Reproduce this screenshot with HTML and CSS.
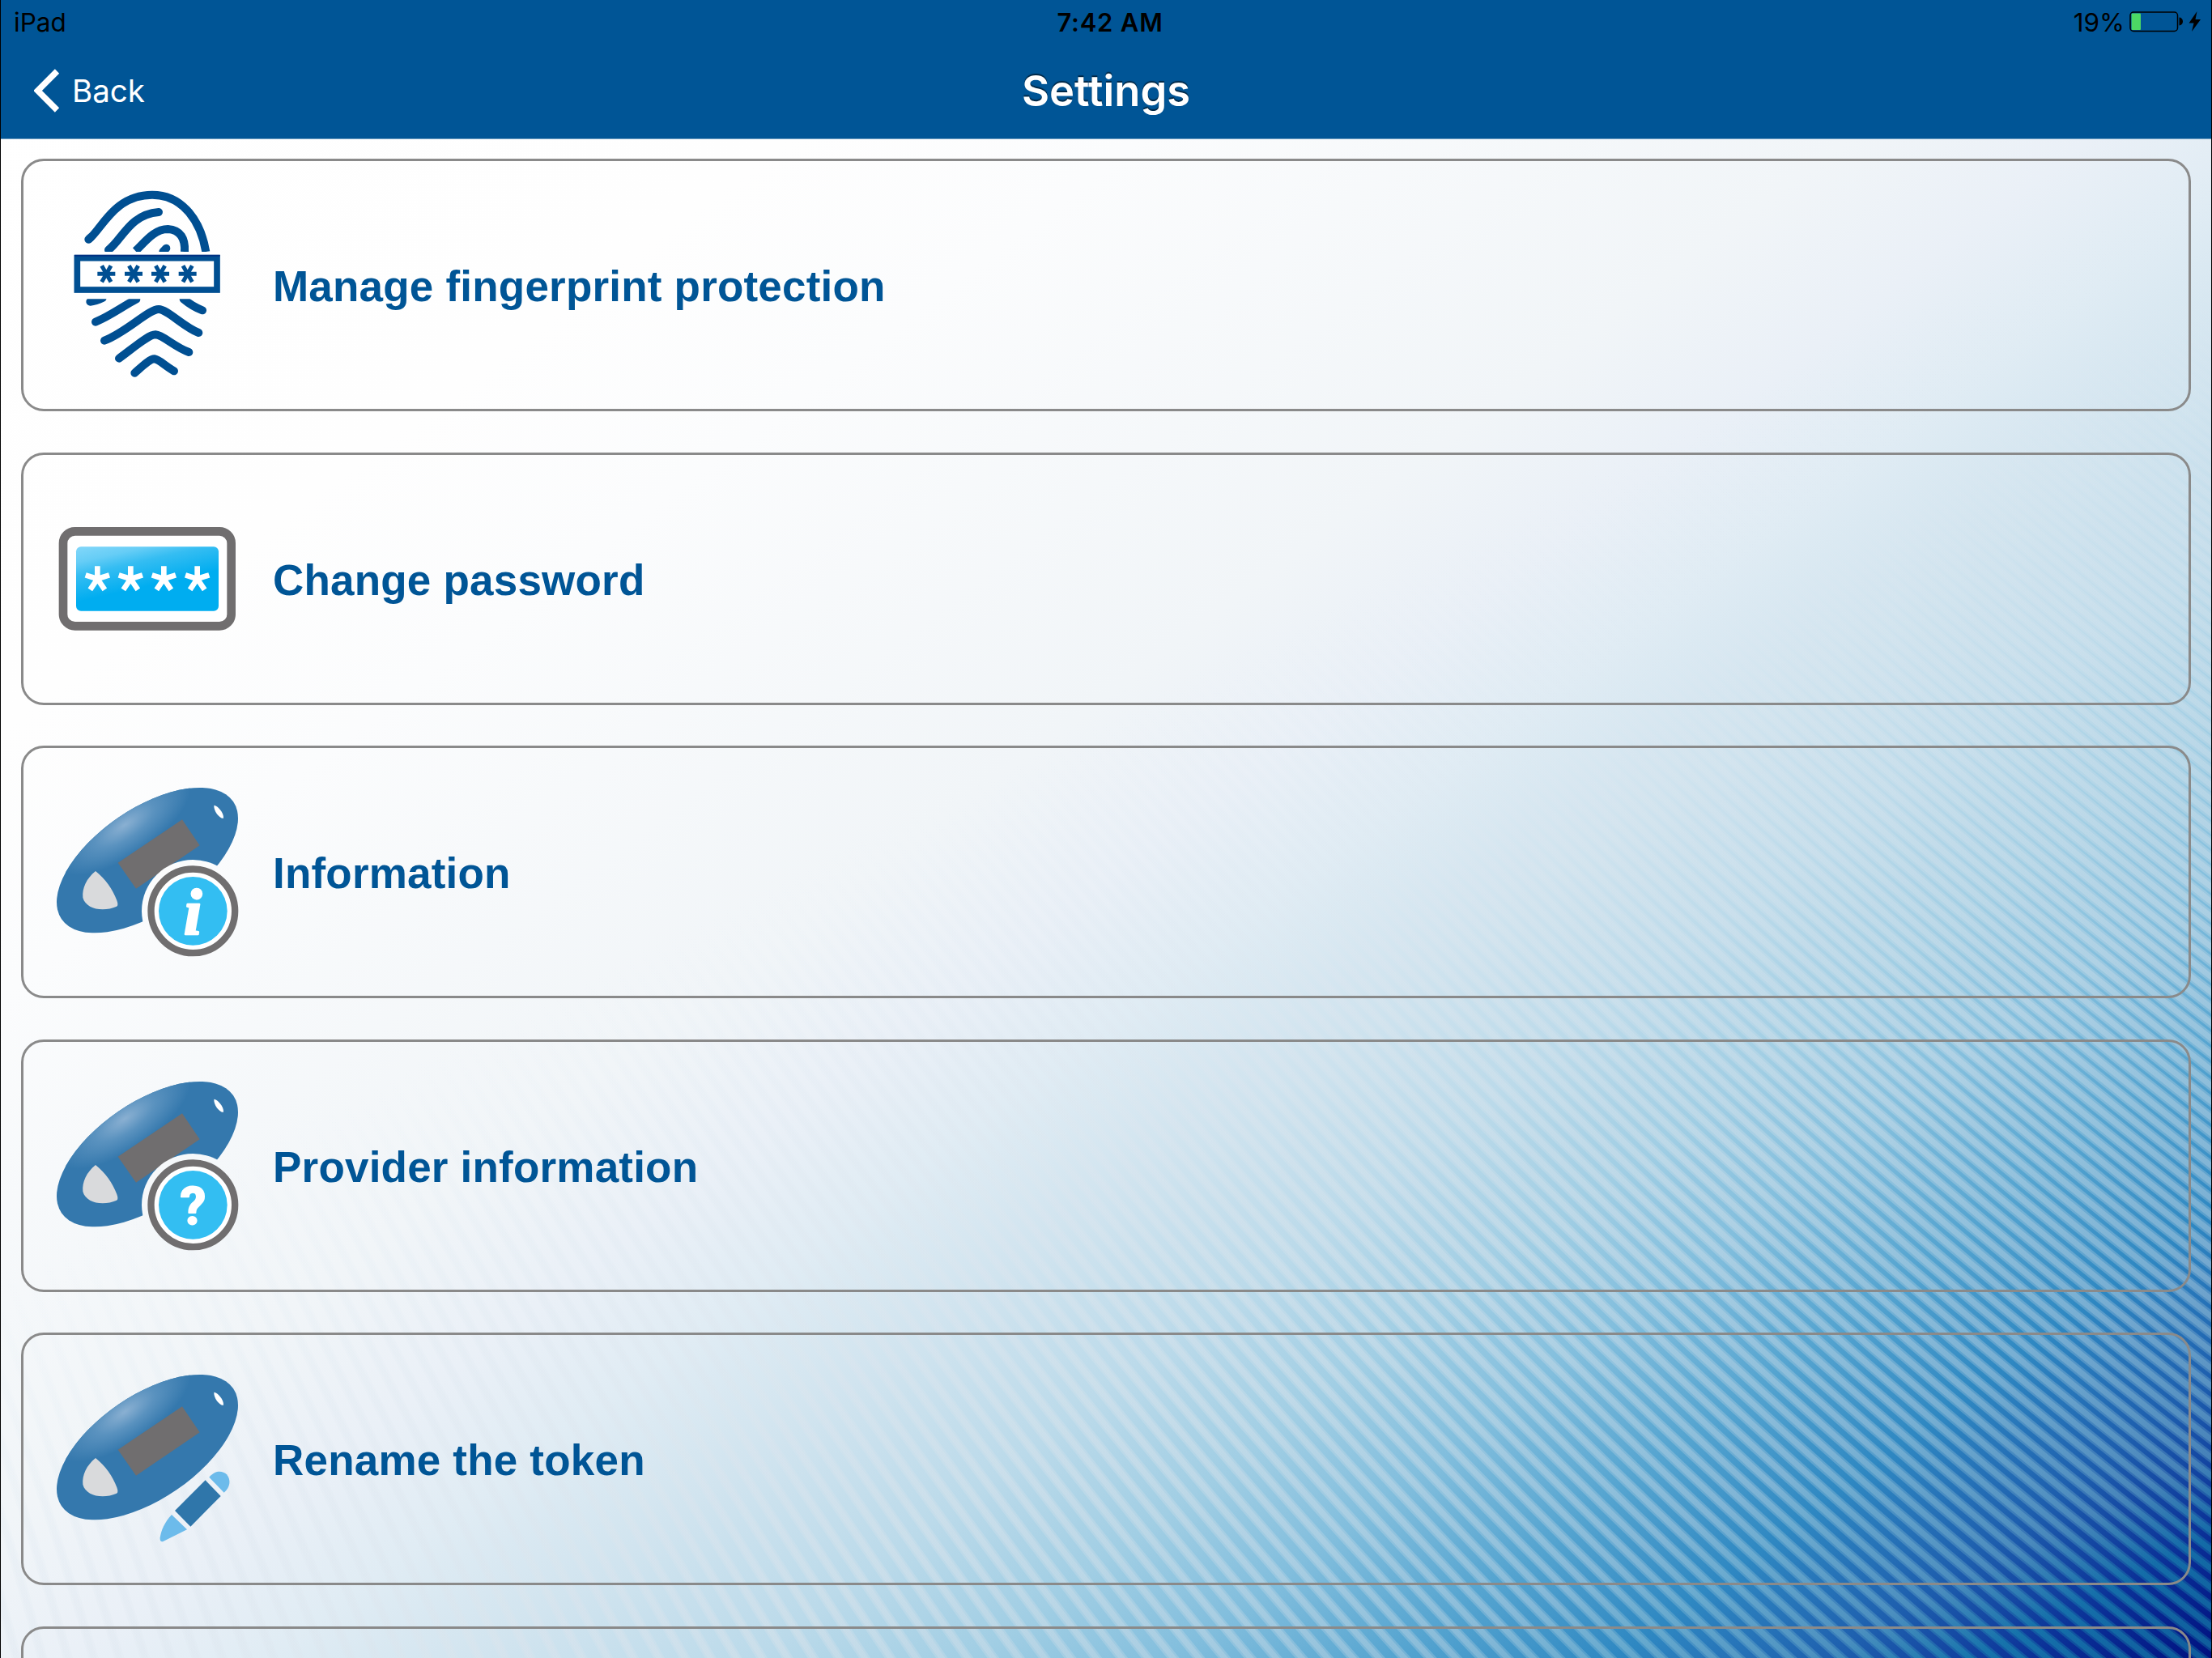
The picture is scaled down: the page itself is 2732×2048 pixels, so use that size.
FILE: index.html
```html
<!DOCTYPE html>
<html lang="en">
<head>
  <meta charset="UTF-8" />
  <meta name="viewport" content="width=device-width, initial-scale=1.0" />
  <title>Settings</title>
  <link rel="stylesheet" href="styles.css">
</head>
<body>
  <svg class="defs" width="0" height="0">
    <defs>
      <radialGradient id="shine">
        <stop offset="0" stop-color="#8ab0d2" />
        <stop offset="0.45" stop-color="#5a92bf" />
        <stop offset="1" stop-color="#3478ad" />
      </radialGradient>
      <clipPath id="tokenShape">
        <ellipse cx="396" cy="337" rx="385.5" ry="191.4" transform="rotate(-34.4 396 337)" />
      </clipPath>
      <mask id="badgeCut" maskUnits="userSpaceOnUse" x="0" y="0" width="800" height="750">
        <rect width="800" height="750" fill="#fff" />
        <circle cx="565" cy="525" r="190" fill="#000" />
      </mask>
      <g id="token">
        <g clip-path="url(#tokenShape)">
          <rect width="800" height="700" fill="#3478ad" />
          <ellipse cx="312" cy="206" rx="285" ry="112" fill="url(#shine)" transform="rotate(-34.4 312 206)" />
        </g>
        <path d="M287 346 L525 186 L590 282 L354 442 Z" fill="#706e6f" />
        <path d="M204 377 C170 405 154 440 157 475 C168 518 232 530 282 508 Q290 505 283 486 C268 445 240 405 204 377 Z" fill="#d9dadc" />
        <path d="M643 133 C655 133 680 160 678 181 C665 184 641 155 643 133 Z" fill="#fff" />
      </g>
      <g id="badge">
        <circle cx="565" cy="525" r="155.500" fill="#fff" stroke="#706e6f" stroke-width="25" />
        <circle cx="565" cy="525" r="127" fill="#33bef2" />
      </g>
      <g id="star6" stroke="#004f92" stroke-width="15" stroke-linecap="butt">
        <path d="M-33 0 H33 M-17 -30 L17 30 M17 -30 L-17 30" />
      </g>
      <path id="star5" d="M0 0 V-47 M0 0 L-44 -14 M0 0 L44 -14 M0 0 L-27 40 M0 0 L27 40" stroke="#fff" stroke-width="20" />
    </defs>
  </svg>

  <svg class="stripes" viewBox="0 0 2732 2048">
    <defs>
      <linearGradient id="stripeFade" gradientUnits="userSpaceOnUse" x1="300" y1="1420" x2="984" y2="2778">
        <stop offset="0" stop-color="#dde9f2" stop-opacity="0" />
        <stop offset="0.12" stop-color="#dde9f2" stop-opacity="0.09" />
        <stop offset="0.27" stop-color="#dee7ef" stop-opacity="0.2" />
        <stop offset="0.55" stop-color="#dae3eb" stop-opacity="0.3" />
        <stop offset="0.8" stop-color="#c6d8e4" stop-opacity="0.28" />
        <stop offset="0.94" stop-color="#7fc4d2" stop-opacity="0.27" />
        <stop offset="1" stop-color="#1fb0bb" stop-opacity="0.27" />
      </linearGradient>
    </defs>
    <path class="wide" />
    <path class="narrow" />
  </svg>

  <header>
    <div class="status">
      <span class="device">iPad</span>
      <span class="time">7:42 AM</span>
      <span class="power">
        <span class="percent">19%</span>
        <svg width="90" height="28" viewBox="0 0 90 28">
          <rect x="1" y="2" width="58.500" height="23.500" rx="4" fill="none" stroke="#000" stroke-width="1.500" />
          <rect x="2.600" y="3.600" width="11.400" height="20.400" rx="1" fill="#4cd964" />
          <path d="M61.500 8.500 A4.500 5 0 0 1 61.500 18.500 Z" fill="#000" />
          <path d="M83.500 1 L73.500 15.500 H79.500 L77 26 L88 11 H81.500 Z" fill="#000" />
        </svg>
      </span>
    </div>
    <div class="navbar">
      <a class="back" href="#">
        <svg width="33" height="54" viewBox="0 0 33 54"><path d="M28.500 3 L4.500 27 L28.500 51" fill="none" stroke="#fff" stroke-width="7.500" /></svg>
        <span>Back</span>
      </a>
      <h1>Settings</h1>
    </div>
  </header>

  <main class="menu">
    <a class="item" href="#">
      <svg class="icon" viewBox="-93 -33 840 918">
        <g fill="none" stroke="#004f92" stroke-width="30" stroke-linecap="round">
          <path d="M148 257 C195 225 240 92 384 92 C500 92 565 195 583 303" stroke-linecap="butt" />
          <path d="M148 257 L156 250" />
          <path d="M408 156 C300 165 275 255 222 296" />
          <path d="M322 300 C355 270 390 219 442 219 C490 222 507 255 504 303" stroke-linecap="butt" />
          <path d="M436 290 L424 303" />
          <path d="M154 488 C172 486 185 481 200 474" />
          <path d="M174 563 C230 540 275 505 325 479" />
          <path d="M207 632 C290 600 370 516 408 516 C440 516 500 582 556 603" />
          <path d="M261 698 C320 655 370 610 396 610 C425 612 465 655 520 675" />
          <path d="M319 752 C350 725 375 700 392 700 C410 702 430 725 465 745" />
          <path d="M500 478 C520 495 540 508 570 520" />
        </g>
        <path d="M80 303 H640 V478 H80 Z" fill="#fff" />
        <rect x="106" y="326" width="518" height="118" fill="#fff" stroke="#004f92" stroke-width="23" />
        <path d="M96 314 H635 V320 H96 Z" fill="#003083" />
        <use href="#star6" x="214" y="385" />
        <use href="#star6" x="315" y="385" />
        <use href="#star6" x="414" y="385" />
        <use href="#star6" x="515" y="385" />
      </svg>
      <span class="label">Manage fingerprint protection</span>
    </a>
    <a class="item" href="#">
      <svg class="icon" viewBox="-63 -205 840 918">
        <defs>
          <linearGradient id="field" gradientUnits="userSpaceOnUse" x1="270" y1="115" x2="312" y2="300">
            <stop offset="0" stop-color="#7dd5f9" />
            <stop offset="0.25" stop-color="#66cdf6" />
            <stop offset="0.5" stop-color="#35bdf2" />
            <stop offset="1" stop-color="#00adf0" />
          </linearGradient>
        </defs>
        <rect x="84" y="78" width="623" height="351" rx="44" fill="#fff" stroke="#706e6f" stroke-width="32" />
        <rect x="132" y="135" width="528" height="238" rx="18" fill="url(#field)" />
        <use href="#star5" x="211" y="254" />
        <use href="#star5" x="334" y="254" />
        <use href="#star5" x="457" y="254" />
        <use href="#star5" x="581" y="254" />
      </svg>
      <span class="label">Change password</span>
    </a>
    <a class="item" href="#">
      <svg class="icon" viewBox="-63 -79 840 918">
        <g mask="url(#badgeCut)"><use href="#token" /></g>
        <use href="#badge" />
        <text class="mark info" x="564" y="610">i</text>
      </svg>
      <span class="label">Information</span>
    </a>
    <a class="item" href="#">
      <svg class="icon" viewBox="-63 -79 840 918">
        <g mask="url(#badgeCut)"><use href="#token" /></g>
        <use href="#badge" />
        <text class="mark help" x="565" y="596">?</text>
      </svg>
      <span class="label">Provider information</span>
    </a>
    <a class="item" href="#">
      <svg class="icon" viewBox="-63 -79 840 918">
        <use href="#token" />
        <path d="M611 459 L668 518 L556 631 L498 572 Z" fill="#2f76aa" />
        <path d="M625 448 C650 420 675 425 690 438 C706 458 704 485 680 505 Z" fill="#6cbbeb" />
        <path d="M486 587 L543 642 L453 687 Q441 688 443 672 C447 645 460 615 486 587 Z" fill="#6cbbeb" />
      </svg>
      <span class="label">Rename the token</span>
    </a>
    <a class="item" href="#"></a>
  </main>

  <script>
    // fan of slanted background lines, flatter towards the right side
    function stripePath() {
      let d = "";
      for (let k = -60; k < 190; k++) {
        const start = k * 28;
        for (let y = 160; y <= 2060; y += 50) {
          const dy = y - 1700;
          const x = (start + 0.36 * dy - 0.0002 * dy * dy) / (1 - 0.00034 * dy);
          d += (y === 160 ? "M" : "L") + x.toFixed(1) + " " + y;
        }
      }
      return d;
    }

    const lines = stripePath();
    document.querySelectorAll(".stripes path").forEach(path => path.setAttribute("d", lines));
  </script>
</body>
</html>
```

FILE: styles.css
```css
* {
  box-sizing: border-box;
}
html {
  height: 100%;
  overflow: hidden;
  background: #000;
}
body {
  position: relative;
  height: 2048px;
  margin: 0 1px;
  overflow: hidden;
  font-family: Inter, "Liberation Sans", sans-serif;
  background: linear-gradient(to bottom right,
    #ffffff 0%, #fefefe 22%, #fbfcfd 30%, #f1f5f8 46%, #eaf0f7 51.5%,
    #e0ecf4 56%, #d1e4ef 61%, #bbdaea 67%, #a1cee4 72%, #82bedd 76.5%,
    #55a4d0 81.5%, #2f88c2 86.5%, #1e5fae 91.5%, #0b3197 96%, #00107f 100%);
}
.defs {
  position: absolute;
}
.stripes {
  position: absolute;
  top: 0;
  left: 0;
  width: 100%;
  height: 100%;
}
.stripes path {
  fill: none;
  stroke: url(#stripeFade);
}
.stripes .wide {
  stroke-width: 12px;
}
.stripes .narrow {
  stroke-width: 7px;
}
header {
  position: relative;
  height: 172px;
  color: #fff;
  background: #005596;
  border-bottom: 1px solid #6f9dc2;
}
.status {
  display: grid;
  grid-template-columns: 1fr auto 1fr;
  align-items: center;
  height: 54px;
  padding: 0 11px 0 16px;
  font-size: 31.5px;
  color: #000;
}
.time {
  margin-right: -5px;
  font-weight: 600;
  font-size: 31px;
  letter-spacing: 0.8px;
}
.power {
  display: flex;
  justify-content: flex-end;
  align-items: center;
  gap: 6px;
}
.navbar {
  display: grid;
  grid-template-columns: 1fr auto 1fr;
  align-items: center;
  height: 115px;
  padding: 0 41px;
}
.back {
  display: flex;
  align-items: center;
  gap: 14px;
  font-size: 38.5px;
  color: #fff;
  text-decoration: none;
}
h1 {
  margin: 0;
  font-size: 52.5px;
  font-weight: 600;
  text-shadow: 0 -2px 1px rgba(0, 0, 0, 0.55);
}
.menu {
  position: relative;
  display: flex;
  flex-direction: column;
  gap: 50.6px;
  height: 1876px;
  padding: 24px 25px 0;
  overflow: hidden;
}
.item {
  display: flex;
  flex: none;
  align-items: center;
  height: 312px;
  border: 3px solid #8a8a8a;
  border-radius: 28px;
  color: #005596;
  text-decoration: none;
}
.icon {
  width: 280px;
  height: 306px;
}
.label {
  padding: 3px 0 0 28px;
  font-family: "Liberation Sans", Arial, sans-serif;
  font-size: 53px;
  font-weight: bold;
  letter-spacing: 0.2px;
}
.mark {
  fill: #fff;
  stroke: #fff;
  stroke-linejoin: round;
  text-anchor: middle;
  font-weight: bold;
}
.info {
  font-family: "Liberation Serif", serif;
  font-size: 240px;
  font-style: italic;
  stroke-width: 8px;
}
.help {
  font-family: Roboto, sans-serif;
  font-size: 192px;
  stroke-width: 6px;
}
```
